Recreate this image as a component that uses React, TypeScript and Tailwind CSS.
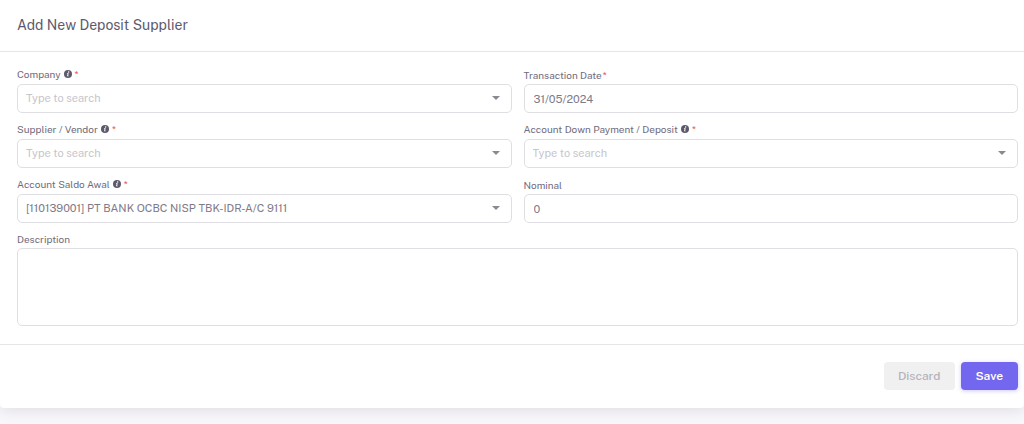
import { useState } from "react";
import type { ReactNode } from "react";

const controlClass =
  "block w-full h-[29px] rounded-[5px] border border-[#dfdfe3] bg-white text-[11px] outline-none focus:border-[#7367f0]";

function InfoIcon() {
  return (
    <svg viewBox="0 0 16 16" className="w-2 h-2 ml-[3px] shrink-0" aria-hidden="true">
      <circle cx="8" cy="8" r="8" fill="#5d596c" />
      <circle cx="9.2" cy="4" r="1.5" fill="#fff" />
      <path
        d="M6 6.6h3.4L8.2 11.4h1.3v1.3H6l1.1-4.8H6z"
        fill="#fff"
      />
    </svg>
  );
}

type FieldProps = {
  id: string;
  label: string;
  info?: boolean;
  required?: boolean;
  children: ReactNode;
};

function Field({ id, label, info, required, children }: FieldProps) {
  return (
    <div className="min-w-0">
      <label
        htmlFor={id}
        className={`flex h-4 items-start text-[10px] text-[#6f6b7d] ${
          info ? "leading-3" : "leading-[14px]"
        }`}
      >
        <span>{label}</span>
        {info && (
          <span className="flex h-3 items-center">
            <InfoIcon />
          </span>
        )}
        {required && (
          <span className={`text-[#ea5455] ${info ? "ml-[3px]" : "ml-px"}`}>*</span>
        )}
      </label>
      {children}
    </div>
  );
}

type SearchSelectProps = {
  id: string;
  options?: string[];
  initial?: string;
};

function SearchSelect({ id, options = [], initial = "" }: SearchSelectProps) {
  const [value, setValue] = useState(initial);

  return (
    <div className="relative">
      <select
        id={id}
        value={value}
        onChange={(e) => setValue(e.target.value)}
        className={`${controlClass} appearance-none pl-2 pr-6 ${
          value ? "text-[#7d7a88]" : "text-[#c6c5cb]"
        }`}
      >
        <option value="">Type to search</option>
        {options.map((option) => (
          <option key={option} value={option}>
            {option}
          </option>
        ))}
      </select>
      <svg
        viewBox="0 0 8 4"
        className="pointer-events-none absolute right-3 top-3 w-2 h-1"
        aria-hidden="true"
      >
        <path d="M0 0h8L4 4z" fill="#8b8894" />
      </svg>
    </div>
  );
}

export default function App() {
  return (
    <div className="min-h-screen bg-[#f8f7fa] font-['Public_Sans','Inter',sans-serif]">
      <form
        onSubmit={(e) => e.preventDefault()}
        className="rounded-b-[4px] bg-white shadow-[0_3px_14px_rgba(75,70,92,0.13)]"
      >
        <header className="border-b border-[#e6e6e9] pl-[17px] pr-1.5 pt-[15px] pb-4">
          <h1 className="text-[14px] leading-5 font-normal text-[#5d596c]">
            Add New Deposit Supplier
          </h1>
        </header>

        <div className="pl-[17px] pr-1.5 pt-4 pb-[18px]">
          <div className="grid grid-cols-2 gap-x-3 gap-y-2.5">
            <Field id="company" label="Company" info required>
              <SearchSelect id="company" />
            </Field>
            <Field id="date" label="Transaction Date" required>
              <input
                id="date"
                type="text"
                defaultValue="31/05/2024"
                className={`${controlClass} px-[9px] text-[#7d7a88]`}
              />
            </Field>
            <Field id="supplier" label="Supplier / Vendor" info required>
              <SearchSelect id="supplier" />
            </Field>
            <Field id="account" label="Account Down Payment / Deposit" info required>
              <SearchSelect id="account" />
            </Field>
            <Field id="saldo" label="Account Saldo Awal" info required>
              <SearchSelect
                id="saldo"
                options={["[110139001] PT BANK OCBC NISP TBK-IDR-A/C 9111"]}
                initial="[110139001] PT BANK OCBC NISP TBK-IDR-A/C 9111"
              />
            </Field>
            <Field id="nominal" label="Nominal">
              <input
                id="nominal"
                type="text"
                inputMode="numeric"
                defaultValue="0"
                className={`${controlClass} px-[9px] text-[#7d7a88]`}
              />
            </Field>
          </div>

          <div className="mt-[9px]">
            <Field id="description" label="Description">
              <textarea
                id="description"
                className="block w-full h-[78px] resize-none rounded-[5px] border border-[#dfdfe3] bg-white px-[9px] py-1.5 text-[11px] text-[#7d7a88] outline-none focus:border-[#7367f0]"
              />
            </Field>
          </div>
        </div>

        <footer className="flex justify-end gap-1.5 border-t border-[#e6e6e9] pl-[17px] pr-1.5 pt-[17px] pb-[18px]">
          <button
            type="button"
            disabled
            className="h-7 rounded-[4px] bg-[#f0f0f1] px-[14px] text-[12px] font-medium text-[#b4b3b9]"
          >
            Discard
          </button>
          <button
            type="submit"
            className="h-7 rounded-[4px] bg-[#7367f0] px-[15px] text-[12px] font-semibold text-white shadow-[0_1px_4px_rgba(115,103,240,0.35)]"
          >
            Save
          </button>
        </footer>
      </form>
    </div>
  );
}
